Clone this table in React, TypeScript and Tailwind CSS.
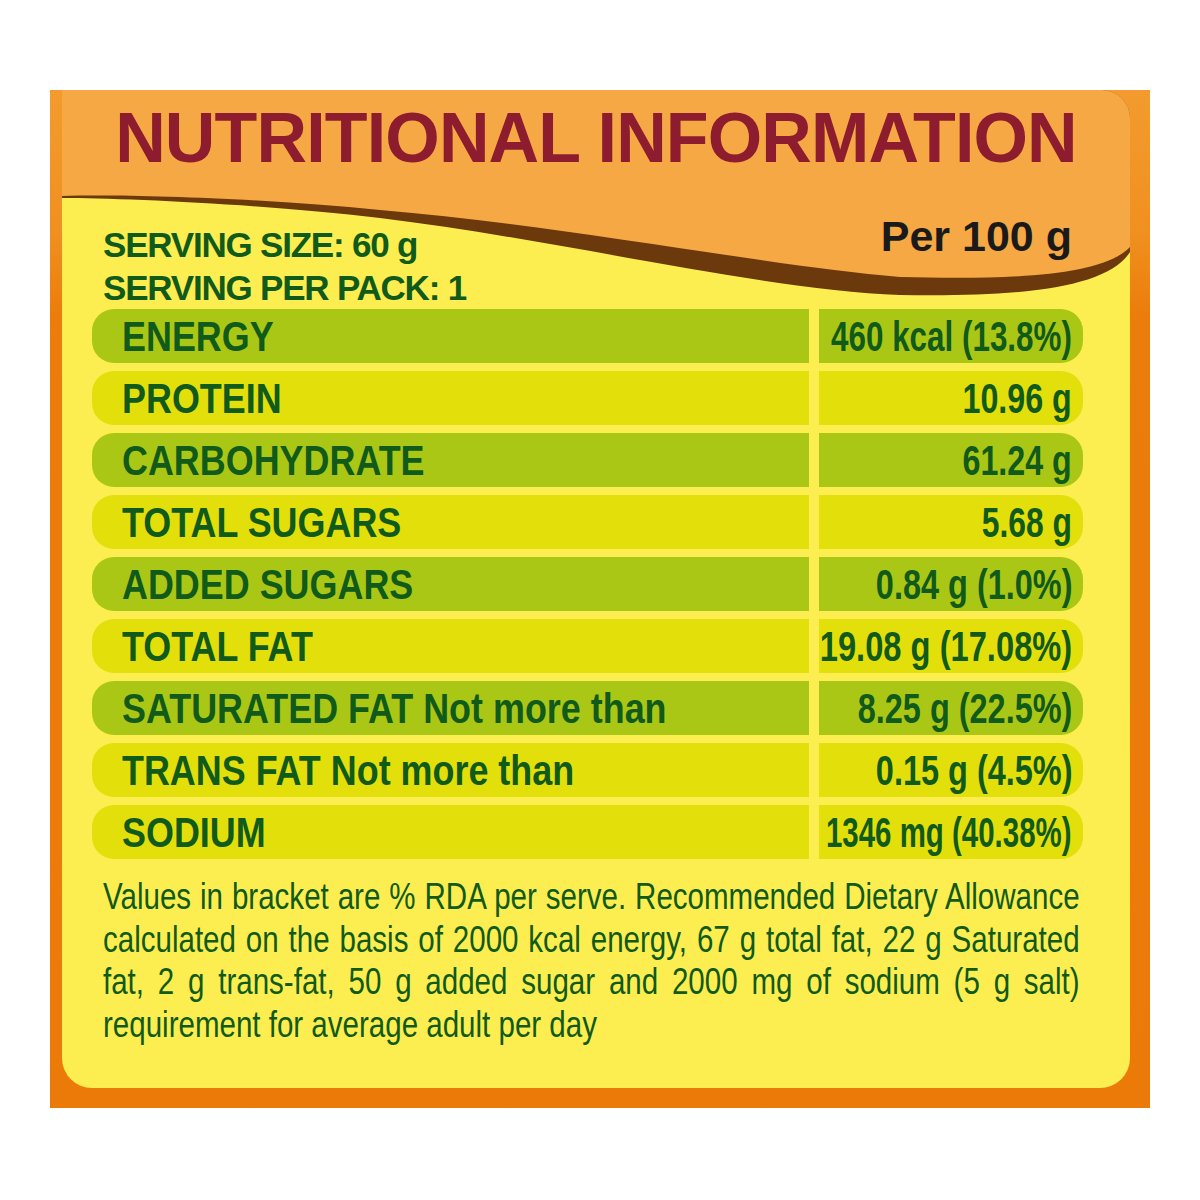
import React from "react";

// Condensed type is faked by squeezing Liberation Sans horizontally.
const rows = [
  { label: "ENERGY", value: "460 kcal (13.8%)", green: true, squeeze: "scale-x-[0.73]" },
  { label: "PROTEIN", value: "10.96 g", green: false, squeeze: "scale-x-[0.75]" },
  { label: "CARBOHYDRATE", value: "61.24 g", green: true, squeeze: "scale-x-[0.75]" },
  { label: "TOTAL SUGARS", value: "5.68 g", green: false, squeeze: "scale-x-[0.74]" },
  { label: "ADDED SUGARS", value: "0.84 g (1.0%)", green: true, squeeze: "scale-x-[0.755]" },
  { label: "TOTAL FAT", value: "19.08 g (17.08%)", green: false, squeeze: "scale-x-[0.76]" },
  { label: "SATURATED FAT Not more than", value: "8.25 g (22.5%)", green: true, squeeze: "scale-x-[0.755]" },
  { label: "TRANS FAT Not more than", value: "0.15 g (4.5%)", green: false, squeeze: "scale-x-[0.755]" },
  { label: "SODIUM", value: "1346 mg (40.38%)", green: false, squeeze: "scale-x-[0.685]" },
];

const notes = [
  "Values in bracket are % RDA per serve. Recommended Dietary Allowance",
  "calculated on the basis of 2000 kcal energy, 67 g total fat, 22 g Saturated",
  "fat, 2 g trans-fat, 50 g added sugar and 2000 mg of sodium (5 g salt)",
];

function HeaderWave() {
  return (
    <svg
      className="absolute left-0 top-0"
      width="1068"
      height="220"
      viewBox="0 0 1068 220"
    >
      <path
        d="M0,0 H1068 V162 C1045,198 960,207 838,205 C700,200 500,150 318,128 C200,114 60,108 0,108 Z"
        fill="#6b390c"
      />
      <path
        d="M0,0 H1068 V157 C1040,186 950,190 838,187 C700,175 500,135 318,120 C200,108 60,104 0,106 Z"
        fill="#f5a843"
      />
    </svg>
  );
}

export default function App() {
  return (
    <div className="min-h-[1200px] bg-white pt-[90px] px-[50px] [font-family:'Liberation_Sans',Arial,sans-serif]">
      {/* Orange frame */}
      <div className="w-[1100px] h-[1018px] pl-[12px] pr-[20px] pb-[20px] bg-[linear-gradient(to_bottom,#f39b2f_0%,#f09020_14%,#ec7d0a_22%,#ec7a08_100%)]">
        {/* Yellow panel */}
        <div className="relative h-full overflow-hidden rounded-tr-[28px] rounded-b-[30px] bg-[#fcee50]">
          <HeaderWave />

          <div className="relative">
            {/* Title */}
            <h1 className="pt-[13px] text-center text-[70px] leading-none font-bold tracking-[-0.85px] text-[#8c1c2e]">
              NUTRITIONAL INFORMATION
            </h1>

            {/* Serving + per 100 g */}
            <div className="flex justify-between pt-[42px] pl-[41px] pr-[58px] font-bold">
              <div className="mt-[8px] text-[35px] leading-[43px] tracking-[-1.2px] text-[#105a1a]">
                <div>SERVING SIZE: 60 g</div>
                <div>SERVING PER PACK: 1</div>
              </div>
              <div className="text-[43px] leading-none text-[#1a1a1a]">Per 100 g</div>
            </div>

            {/* Nutrient rows */}
            <div className="flex flex-col gap-[8px] pl-[30px] pr-[47px] font-bold text-[43px] leading-[54px] text-[#105a1a]">
              {rows.map((r) => (
                <div key={r.label} className="flex h-[54px] gap-[10px]">
                  <div
                    className={
                      "w-[717px] shrink-0 rounded-l-[22px] pl-[30px] whitespace-nowrap " +
                      (r.green ? "bg-[#abc716]" : "bg-[#e3df0a]")
                    }
                  >
                    <span className="inline-block origin-left scale-x-[0.835]">{r.label}</span>
                  </div>
                  <div
                    className={
                      "flex flex-1 min-w-0 justify-end rounded-r-[22px] pr-[11px] whitespace-nowrap " +
                      (r.green ? "bg-[#abc716]" : "bg-[#e3df0a]")
                    }
                  >
                    <span className={"block shrink-0 origin-right " + r.squeeze}>{r.value}</span>
                  </div>
                </div>
              ))}
            </div>

            {/* Footnote */}
            <div className="mt-[17px] pl-[41px] text-[36px] leading-[42.5px] text-[#105a1a]">
              <div className="w-[1191px] origin-left scale-x-[0.82]">
                {notes.map((n) => (
                  <div key={n} className="whitespace-nowrap [text-align-last:justify]">
                    {n}
                  </div>
                ))}
                <div className="whitespace-nowrap">requirement for average adult per day</div>
              </div>
            </div>
          </div>
        </div>
      </div>
    </div>
  );
}
